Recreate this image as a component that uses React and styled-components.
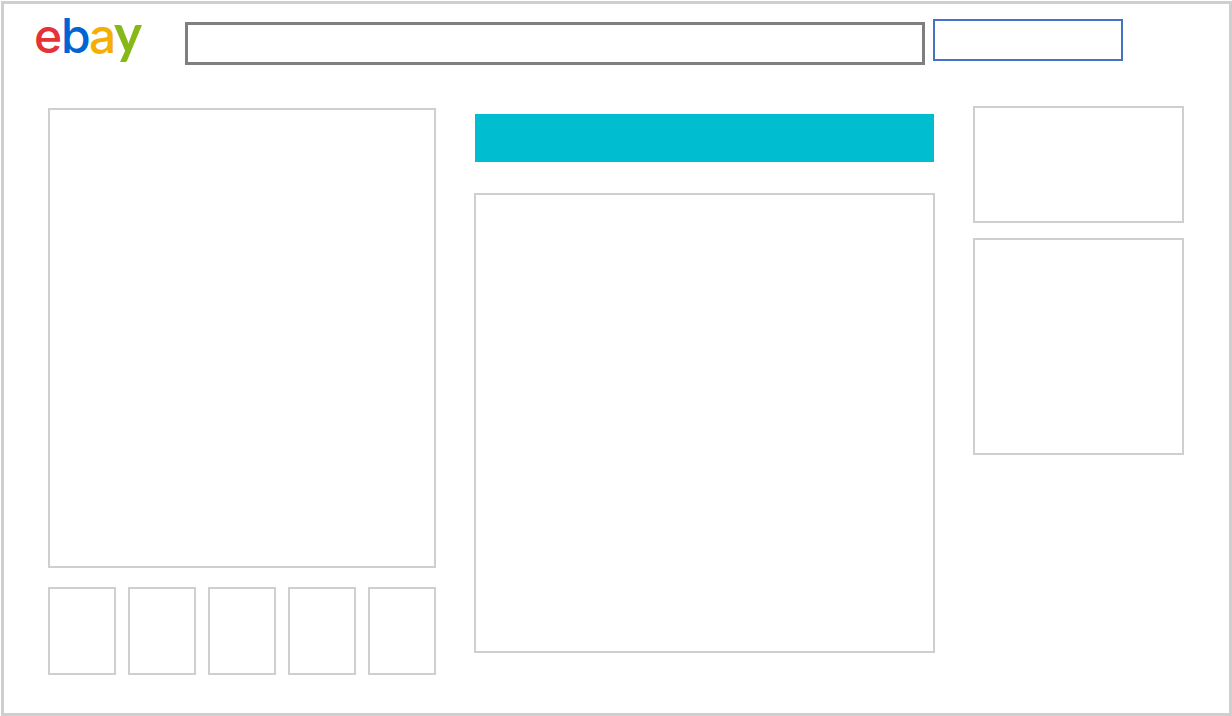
import React from "react";
import styled, { createGlobalStyle } from "styled-components";

const GlobalStyle = createGlobalStyle`
  * {
    box-sizing: border-box;
  }
  body {
    margin: 0;
    background: #ffffff;
    font-family: "Liberation Sans", Arial, sans-serif;
  }
`;

const Frame = styled.div`
  margin: 1px 0 0 1px;
  min-height: calc(100vh - 1px);
  border: 3px solid #cfcfcf;
`;

const Header = styled.header`
  display: flex;
  align-items: flex-start;
  padding: 15px 106px 0 32px;
`;

const LogoLink = styled.a`
  flex: none;
  width: 149px;
  height: 46px;
`;

const LogoSvg = styled.svg`
  display: block;
  overflow: visible;
`;

const SearchForm = styled.form`
  display: flex;
  flex: 1;
  align-items: flex-start;
  gap: 8px;
`;

const SearchField = styled.label`
  display: flex;
  flex: 1;
  padding-top: 3px;
`;

const SearchInput = styled.input`
  width: 100%;
  height: 43px;
  padding: 0 12px;
  border: 3px solid #7f7f7f;
  border-radius: 0;
  background: transparent;
  font-size: 18px;
`;

const SearchButton = styled.button`
  width: 190px;
  height: 42px;
  border: 2px solid #4472c4;
  background: transparent;
  cursor: pointer;
`;

const Main = styled.main`
  display: grid;
  grid-template-columns: 388fr 461fr 211fr;
  align-items: start;
  column-gap: 38px;
  padding: 41px 45px 37px 44px;
`;

const Column = styled.section`
  display: flex;
  flex-direction: column;
  gap: ${({ $gap }) => $gap}px;
  padding-top: ${({ $top }) => $top || 0}px;
`;

const Panel = styled.div`
  height: ${({ $height }) => $height}px;
  border: 2px solid #cfcfcf;
`;

const Banner = styled.div`
  height: 48px;
  margin: 0 1px;
  background: #00bdd0;
`;

const Thumbs = styled.div`
  display: flex;
  justify-content: space-between;
`;

const Thumb = styled.button`
  width: 68px;
  height: 88px;
  padding: 0;
  border: 2px solid #cfcfcf;
  background: transparent;
  cursor: pointer;
`;

const Logo = () => (
  <LogoSvg width="107" height="43" viewBox="0 0 107 43" role="img" aria-label="ebay">
    <g fontFamily="Inter, sans-serif" fontSize="48" fontWeight="500">
      <text x="-2" y="34" fill="#e53238">e</text>
      <text x="25" y="34" fill="#0064d2">b</text>
      <text x="53" y="34" fill="#f5af02">a</text>
    </g>
    <text x="78" y="34" fill="#86b817" fontFamily="Lato, sans-serif" fontSize="53" fontWeight="700">
      y
    </text>
  </LogoSvg>
);

const thumbs = [1, 2, 3, 4, 5];

const App = () => {
  return (
    <>
      <GlobalStyle />
      <Frame>
        <Header>
          <LogoLink href="#">
            <Logo />
          </LogoLink>
          <SearchForm>
            <SearchField>
              <SearchInput type="text" aria-label="Search" />
            </SearchField>
            <SearchButton type="button" aria-label="Search" />
          </SearchForm>
        </Header>
        <Main>
          <Column $gap={19} $top={2}>
            <Panel $height={460} />
            <Thumbs>
              {thumbs.map((n) => (
                <Thumb key={n} type="button" aria-label={`Photo ${n}`} />
              ))}
            </Thumbs>
          </Column>
          <Column $gap={31} $top={8}>
            <Banner />
            <Panel $height={460} />
          </Column>
          <Column $gap={15}>
            <Panel $height={117} />
            <Panel $height={217} />
          </Column>
        </Main>
      </Frame>
    </>
  );
};

export default App;
